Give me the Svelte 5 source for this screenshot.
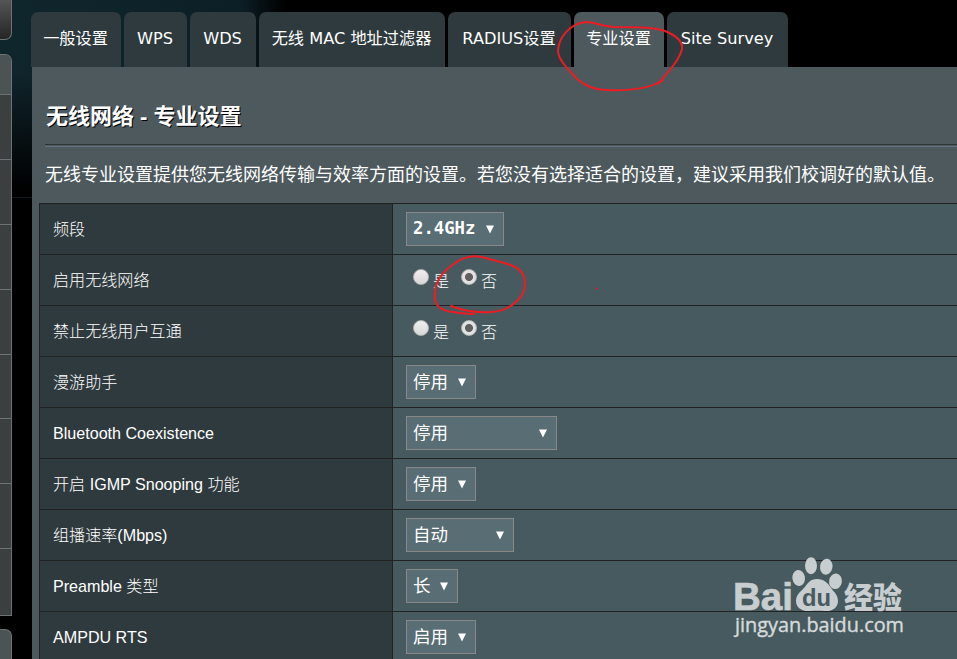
<script>
  const tabs = [
    { name: "一般设置", width: 90 },
    { name: "WPS", width: 63, latin: true },
    { name: "WDS", width: 66, latin: true },
    { name: "无线 MAC 地址过滤器", width: 186 },
    { name: "RADIUS设置", width: 123 },
    { name: "专业设置", width: 90 },
    { name: "Site Survey", width: 121, latin: true },
  ];

  const rows = [
    { label: "频段", type: "select", value: "2.4GHz", width: 98, mono: true },
    { label: "启用无线网络", type: "radio" },
    { label: "禁止无线用户互通", type: "radio" },
    { label: "漫游助手", type: "select", value: "停用", width: 70 },
    { label: "Bluetooth Coexistence", type: "select", value: "停用", width: 151 },
    { label: "开启 IGMP Snooping 功能", type: "select", value: "停用", width: 70 },
    { label: "组播速率(Mbps)", type: "select", value: "自动", width: 108 },
    { label: "Preamble 类型", type: "select", value: "长", width: 52 },
    { label: "AMPDU RTS", type: "select", value: "启用", width: 70 },
  ];

  let activeTab = "专业设置";
  let radios = { 启用无线网络: "否", 禁止无线用户互通: "否" };
</script>

<div class="page">
  <aside class="sidebar">
    <div class="box_top"></div>
    <div class="menu">
      <div class="menu_head"></div>
      {#each Array(8) as _}
        <div class="menu_item"></div>
      {/each}
    </div>
    <div class="box_bottom"></div>
  </aside>

  <main>
    <nav class="tabs">
      {#each tabs as tab}
        <button
          class="tab"
          class:latin={tab.latin}
          class:active={tab.name === activeTab}
          style="width: {tab.width}px"
          on:click={() => (activeTab = tab.name)}>{tab.name}</button
        >
      {/each}
    </nav>

    <section class="panel">
      <h1>无线网络 - 专业设置</h1>
      <div class="line"></div>
      <p class="desc">
        无线专业设置提供您无线网络传输与效率方面的设置。若您没有选择适合的设置，建议采用我们校调好的默认值。
      </p>

      <div class="table">
        {#each rows as row}
          <div class="row">
            <div class="label">{row.label}</div>
            <div class="value">
              {#if row.type === "select"}
                <div class="select" class:mono={row.mono} style="width: {row.width}px">
                  <span>{row.value}</span>
                  <svg width="8" height="9" viewBox="0 0 8 9">
                    <path d="M0 0.5H8L4 8.5Z" fill="#fff" />
                  </svg>
                </div>
              {:else}
                {#each ["是", "否"] as option}
                  <label class="radio">
                    <input type="radio" value={option} bind:group={radios[row.label]} />
                    <span>{option}</span>
                  </label>
                {/each}
              {/if}
            </div>
          </div>
        {/each}
      </div>
    </section>
  </main>

  <svg class="marks" width="957" height="659" viewBox="0 0 957 659">
    <path
      d="M659 82C662 81 664 78 662 81C648 89 628 91 606 90C591 89 584 85 576 78C565 66 558 59 558 50C559 37 570 24 585 22C596 22 600 26 613 27C633 27 653 27 665 31C675 35 683 40 682 49C679 61 667 73 658 84"
    />
    <path
      d="M451 306C464 311 478 313 492 312C506 311 518 303 523 293C527 282 525 272 515 267C505 262 495 261 482 257C468 254 459 260 451 266C438 276 434 286 435 300C437 308 443 311 453 312C461 313 466 314 474 314"
    />
    <circle cx="597" cy="288.5" r="1" />
  </svg>

  <svg class="logo" width="180" height="90" viewBox="730 552 180 90">
    <text x="733" y="609.5" class="bai" textLength="60" lengthAdjust="spacingAndGlyphs">Bai</text>
    <ellipse cx="798.7" cy="578" rx="6.3" ry="8" transform="rotate(-8 798.7 578)" />
    <ellipse cx="811" cy="565.7" rx="6" ry="8.5" />
    <ellipse cx="826.3" cy="566.7" rx="6.2" ry="8" transform="rotate(10 826.3 566.7)" />
    <ellipse cx="835.5" cy="581.3" rx="6.4" ry="7.8" transform="rotate(8 835.5 581.3)" />
    <path
      d="M817 579C824 579 828 583 831 588C834 592 838 595 838 601C838 608 832 611.5 825 611C820 610.5 815 610.5 810 611C802 611.5 796 608 796 601C796 595 800 592 804 588C808 583 810 579 817 579Z"
    />
    <text x="802" y="605.5" class="du" textLength="29" lengthAdjust="spacingAndGlyphs">du</text>
    <text x="844" y="607.5" class="jingyan" textLength="58" lengthAdjust="spacingAndGlyphs">经验</text>
    <text x="735" y="632" class="url" textLength="169" lengthAdjust="spacingAndGlyphs">jingyan.baidu.com</text>
  </svg>
</div>

<style>
  :global(body) {
    margin: 0;
    background: #000;
  }

  .page {
    position: relative;
    display: flex;
    width: 957px;
    height: 659px;
    overflow: hidden;
    color: #fff;
    font-family: "Liberation Sans", "Noto Sans CJK SC", sans-serif;
    background:
      linear-gradient(#10191e, #10191e) 0 197px / 32px 1px no-repeat,
      linear-gradient(to bottom, transparent 70px, #000 190px),
      linear-gradient(to right, #10262d 0, #0c1f26 240px, #000 285px);
  }

  .sidebar {
    flex: none;
    display: flex;
    flex-direction: column;
    width: 12px;
    height: 659px;
  }

  .box_top,
  .menu,
  .box_bottom {
    box-sizing: border-box;
    border-right: 1px solid #6d7373;
  }

  .box_top {
    height: 40px;
    margin-bottom: 14px;
    border-bottom: 1px solid #6d7373;
    border-radius: 0 0 7px 0;
    background: linear-gradient(#555, #252525);
  }

  .menu {
    height: 562px;
    border-top: 1px solid #6d7373;
    border-radius: 0 7px 0 0;
    background: #3b3f40;
    overflow: hidden;
  }

  .menu_head {
    height: 39px;
    border-bottom: 1px solid #6d7373;
    background: #4b5355;
  }

  .menu_item {
    box-sizing: border-box;
    height: 64.9px;
    border-bottom: 1px solid #6d7373;
  }

  .menu_item:last-child {
    height: 66.5px;
  }

  .box_bottom {
    flex: 1;
    margin-top: 13px;
    border-top: 1px solid #6d7373;
    border-radius: 0 7px 0 0;
    background: #4b5355;
  }

  main {
    flex: 1;
    min-width: 0;
    padding-left: 19px;
  }

  .tabs {
    display: flex;
    gap: 3px;
    padding-top: 12px;
  }

  .tab {
    flex: none;
    height: 55px;
    padding: 0 1px 6px 0;
    border: none;
    border-radius: 7px 7px 0 0;
    background: #2f3a3e;
    color: #fff;
    font: 16.2px "DejaVu Sans", "Noto Sans CJK SC", sans-serif;
    white-space: nowrap;
    cursor: pointer;
  }

  .tab.latin {
    padding-bottom: 2px;
  }

  .tab.active {
    background: #4d595d;
  }

  .panel {
    height: 592px;
    margin-left: 1px;
    background: #4d595d;
    overflow: hidden;
  }

  h1 {
    margin: 0 0 0 14px;
    padding-top: 34px;
    font-size: 22px;
    line-height: 32px;
    font-weight: 700;
    text-shadow: 1px 1px 0 #000;
  }

  .line {
    height: 1px;
    margin: 11px 0 0 13px;
    border-top: 1px solid #2c3436;
    border-bottom: 1px solid #627480;
  }

  .desc {
    margin: 14px 0 0 13px;
    font-size: 18px;
    line-height: 28px;
    font-weight: 400;
    white-space: nowrap;
  }

  .table {
    margin: 14px 0 0 7px;
    border-top: 1px solid #222;
    border-left: 1px solid #222;
    background: #475a5f;
  }

  .row {
    display: flex;
    height: 50px;
    border-bottom: 1px solid #222;
  }

  .label {
    box-sizing: border-box;
    width: 353px;
    height: 50px;
    padding-left: 13px;
    border-right: 1px solid #222;
    background: #2f3a3e;
    font-size: 16.1px;
    line-height: 50px;
    font-weight: 300;
  }

  .value {
    display: flex;
    align-items: center;
    padding-left: 13px;
  }

  .select {
    box-sizing: border-box;
    display: flex;
    align-items: center;
    justify-content: space-between;
    height: 34px;
    padding: 0 9px 0 6px;
    border: 1px solid #888;
    background: #596d74;
    font-size: 17.5px;
    line-height: 30px;
    font-weight: 400;
    font-family: "Noto Sans CJK SC", sans-serif;
  }

  .select span {
    margin-top: -2px;
  }

  .select.mono {
    font: bold 17.3px "DejaVu Sans Mono", monospace;
  }

  .radio {
    display: flex;
    align-items: center;
    width: 41px;
    padding-left: 7px;
    font-size: 16px;
    font-weight: 300;
  }

  .radio input {
    appearance: none;
    width: 16px;
    height: 16px;
    margin: 0 4px 7px 0;
    border: 1px solid #b4b4b4;
    border-radius: 50%;
    background: linear-gradient(#eee, #d8d8d8);
  }

  .radio input:checked {
    background: radial-gradient(circle, #606060 0 3.6px, #e2e2e2 4.4px);
  }

  .radio span {
    margin-top: -1px;
  }

  .marks {
    position: absolute;
    left: 0;
    top: 0;
    pointer-events: none;
    fill: none;
    stroke: #ed1c24;
    stroke-width: 2;
    stroke-linecap: round;
  }

  .marks circle {
    fill: #ed1c24;
    stroke: none;
  }

  .logo {
    position: absolute;
    left: 730px;
    top: 552px;
    fill: #c8cdcf;
    pointer-events: none;
  }

  .bai {
    font: bold 39px "Liberation Sans", sans-serif;
    stroke: #c8cdcf;
    stroke-width: 0.7;
  }

  .du {
    font: bold 24px "Liberation Sans", sans-serif;
    fill: #475a5f;
  }

  .jingyan {
    font: 900 30px "Noto Sans CJK SC", sans-serif;
  }

  .url {
    font: 500 20px "Open Sans", "Noto Sans", sans-serif;
    fill: #d6dadb;
    stroke: #d6dadb;
    stroke-width: 0.4;
  }
</style>
